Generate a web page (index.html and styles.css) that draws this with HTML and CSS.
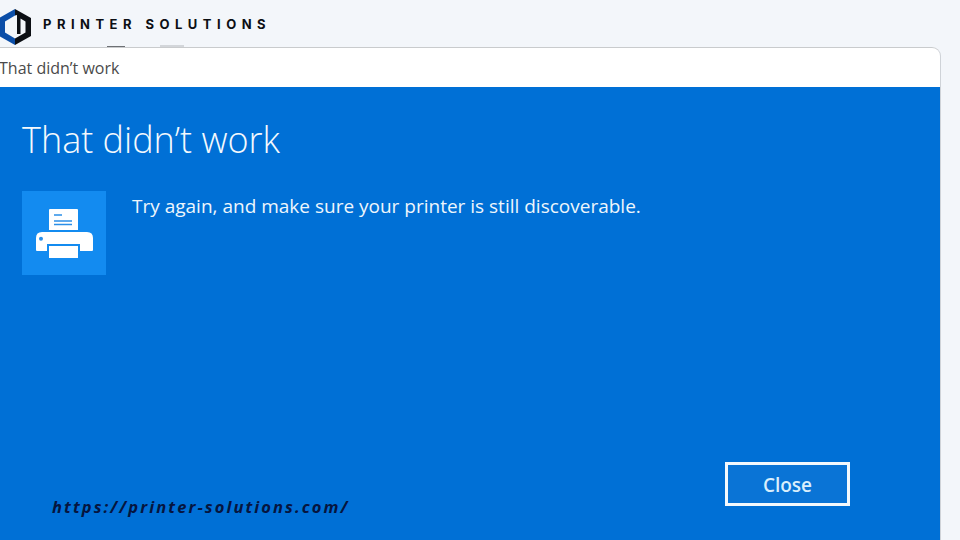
FILE: index.html
```html
<!DOCTYPE html>
<html lang="en">
<head>
<meta charset="utf-8">
<title>That didn’t work</title>
<link rel="stylesheet" href="styles.css">
</head>
<body>
<header class="brand">
  <svg class="logo" width="32" height="36" viewBox="0 0 32 36" aria-hidden="true">
    <path class="logo-blue" d="M16 0 L16 6.500 L6 12.500 L6 23.500 L16 29.500 L16 36 L0 27 L0 9 Z"/>
    <path class="logo-dark" d="M16 0 L32 9 L32 27 L16 36 L16 29.500 L26.500 23.500 L26.500 12.500 L21.500 9.500 L21.500 25 L18 25 L18 6 L16 6.500 Z"/>
  </svg>
  <span class="brand-name">PRINTER SOLUTIONS</span>
  <span class="scrap scrap-a"></span>
  <span class="scrap scrap-b"></span>
</header>
<main class="window">
  <div class="titlebar">That didn’t work</div>
  <section class="panel">
    <h1 class="heading">That didn’t work</h1>
    <div class="message">
      <div class="tile">
        <svg width="57" height="49" viewBox="0 0 57 49" aria-hidden="true">
          <path class="ico" d="M13 1 Q13 0 14 0 L41 0 Q42 0 42 1 L42 21 L13 21 Z"/>
          <path class="ico-line" d="M18 6 H26 M18 12 H36 M18 15.500 H36"/>
          <path class="ico" d="M6 23 L51 23 Q57 23 57 29 L57 41 Q57 42 56 42 L44 42 L44 35 L11 35 L11 42 L1 42 Q0 42 0 41 L0 29 Q0 23 6 23 Z"/>
          <circle class="ico-dot" cx="5" cy="29.700" r="2"/>
          <rect class="ico" x="13" y="37" width="29" height="12"/>
        </svg>
      </div>
      <p class="message-text">Try again, and make sure your printer is still discoverable.</p>
    </div>
    <div class="actions">
      <button class="close" type="button">Close</button>
    </div>
    <a class="url">https://printer-solutions.com/</a>
  </section>
</main>
</body>
</html>
```
FILE: styles.css
```css
* { box-sizing: border-box; }
html, body { margin: 0; height: 100%; }
body {
  width: 960px;
  height: 540px;
  overflow: hidden;
  background: #f3f6fa;
  display: flex;
  flex-direction: column;
  font-family: "Open Sans", "Noto Sans", sans-serif;
}
.brand {
  position: relative;
  height: 47px;
  flex: none;
  display: flex;
  align-items: flex-start;
  gap: 12px;
  padding-top: 9px;
}
.logo { flex: none; margin-left: -1px; }
.logo-blue { fill: #0b4ea8; }
.logo-dark { fill: #0c0f14; }
.brand-name {
  font-family: "Inter", sans-serif;
  font-weight: 700;
  font-size: 13px;
  letter-spacing: 5.480px;
  color: #0c0f14;
  line-height: 30px;
}
.scrap {
  position: absolute;
  bottom: 0;
  background: #6d7074;
}
.scrap-a { left: 107px; width: 18px; height: 1px; }
.scrap-b { left: 160px; width: 24px; height: 2px; background: #d3d6da; }
.window {
  width: 941px;
  flex: 1;
  display: flex;
  flex-direction: column;
  background: #fff;
  border-top: 1px solid #c9cbcd;
  border-right: 1px solid #cfd3d8;
  border-top-right-radius: 9px;
  overflow: hidden;
}
.titlebar {
  height: 39px;
  flex: none;
  display: flex;
  align-items: center;
  margin-left: -1px;
  font-size: 16px;
  color: #4a4a4a;
}
.panel {
  position: relative;
  flex: 1;
  display: flex;
  flex-direction: column;
  background: #0070d6;
  color: #fff;
  padding: 29px 0 34px 22px;
}
.heading {
  margin: 0;
  font-weight: 300;
  font-size: 36px;
  line-height: 48px;
  color: #f4f9fd;
}
.message {
  display: flex;
  align-items: flex-start;
  gap: 26px;
  margin-top: 27px;
}
.tile {
  width: 84px;
  height: 84px;
  flex: none;
  background: #138bf0;
  display: flex;
  align-items: flex-start;
  justify-content: flex-start;
  padding: 18px 0 0 14px;
}
.ico { fill: #fff; }
.ico-line { stroke: #2b8fe8; stroke-width: 1.500; fill: none; }
.ico-dot { fill: #2b8fe8; }
.message-text {
  margin: 0;
  padding-top: 1px;
  font-size: 19px;
  line-height: 28px;
  color: #eef6fc;
}
.actions {
  margin-top: auto;
  padding-left: 703px;
}
.close {
  width: 125px;
  height: 44px;
  background: #0a74d6;
  border: 3px solid #f4f9fd;
  color: #d9eefc;
  font: 600 19px/36px "Open Sans", sans-serif;
  padding: 1px 0 0;
}
.url {
  position: absolute;
  left: 52px;
  top: 408px;
  font-family: "Open Sans", sans-serif;
  font-style: italic;
  font-weight: 700;
  font-size: 16.500px;
  letter-spacing: 2.080px;
  color: #06153f;
}
```
